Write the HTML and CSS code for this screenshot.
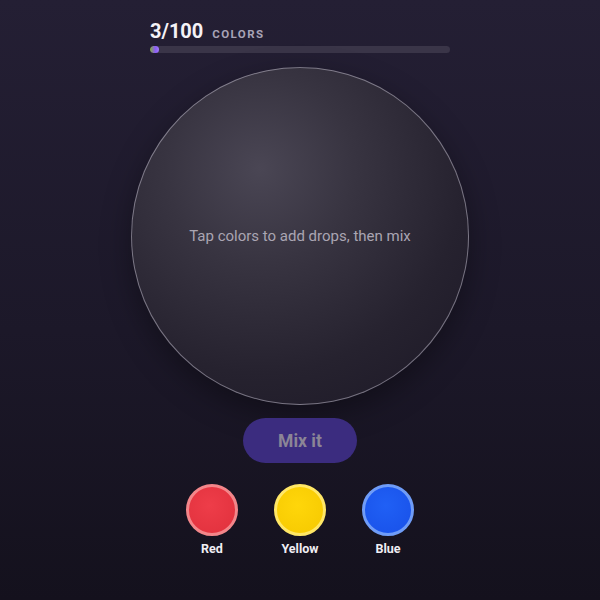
FILE: index.html
```
<!DOCTYPE html>
<html>
<head>
<meta charset="utf-8">
<link rel="stylesheet" href="styles.css">
</head>
<body>
<main class="app">
  <header class="progress">
    <div class="count"><span class="num">3/100</span><span class="label">COLORS</span></div>
    <div class="bar"><div class="fill" style="width:3%"></div></div>
  </header>
  <div class="bowl">
    <p class="hint">Tap colors to add drops, then mix</p>
  </div>
  <button class="mix">Mix it</button>
  <div class="palette">
    <div class="swatch"><span class="drop red"></span><span class="name">Red</span></div>
    <div class="swatch"><span class="drop yellow"></span><span class="name">Yellow</span></div>
    <div class="swatch"><span class="drop blue"></span><span class="name">Blue</span></div>
  </div>
</main>
</body>
</html>
```
FILE: styles.css
```
html, body {
  margin: 0;
  height: 100%;
}
body {
  background: linear-gradient(180deg, #241f34 0%, #1c1829 55%, #14111d 100%);
  font-family: Roboto, "Liberation Sans", sans-serif;
  color: #fff;
}
.app {
  display: flex;
  flex-direction: column;
  align-items: center;
  padding-top: 19px;
}
.progress {
  width: 300px;
}
.count {
  display: flex;
  align-items: baseline;
  gap: 9px;
  height: 24px;
}
.num {
  font-size: 20px;
  font-weight: 700;
  color: #f4f2f7;
}
.label {
  font-size: 11.5px;
  font-weight: 700;
  letter-spacing: 1.4px;
  color: #a8a3b6;
}
.bar {
  margin-top: 3px;
  height: 7px;
  border-radius: 4px;
  background: #3a3548;
  overflow: hidden;
}
.fill {
  height: 100%;
  border-radius: 4px;
  background: linear-gradient(90deg, #7fae3a 0%, #8b5cf6 60%, #a27cf8 100%);
}
.bowl {
  margin-top: 14px;
  width: 338px;
  height: 338px;
  box-sizing: border-box;
  border-radius: 50%;
  border: 1.5px solid rgba(220, 215, 230, 0.45);
  background: radial-gradient(circle at 38% 30%, #4a4654 0%, #383441 30%, #26222f 65%, #1b1725 100%);
  box-shadow: 0 10px 30px rgba(0, 0, 0, 0.35);
  display: flex;
  align-items: center;
  justify-content: center;
}
.hint {
  margin: 0;
  font-size: 15px;
  color: #aaa5b2;
}
.mix {
  margin-top: 13px;
  width: 114px;
  height: 45px;
  border: none;
  border-radius: 23px;
  background: #3b2c7f;
  color: #8b8596;
  font-family: Roboto, "Liberation Sans", sans-serif;
  font-size: 17.5px;
  font-weight: 700;
}
.palette {
  margin-top: 21px;
  display: flex;
  gap: 36px;
}
.swatch {
  width: 52px;
  display: flex;
  flex-direction: column;
  align-items: center;
  gap: 5px;
}
.drop {
  width: 52px;
  height: 52px;
  box-sizing: border-box;
  border-radius: 50%;
  border: 3px solid;
}
.red {
  background: radial-gradient(circle at 45% 40%, #ee3d49 0%, #e0303c 100%);
  border-color: #f3868a;
}
.yellow {
  background: radial-gradient(circle at 45% 40%, #ffd60a 0%, #f5c800 100%);
  border-color: #ffe766;
}
.blue {
  background: radial-gradient(circle at 45% 40%, #2060f5 0%, #1850e8 100%);
  border-color: #6f9cf7;
}
.name {
  font-size: 12.5px;
  font-weight: 700;
  color: #f0eef4;
}
```
